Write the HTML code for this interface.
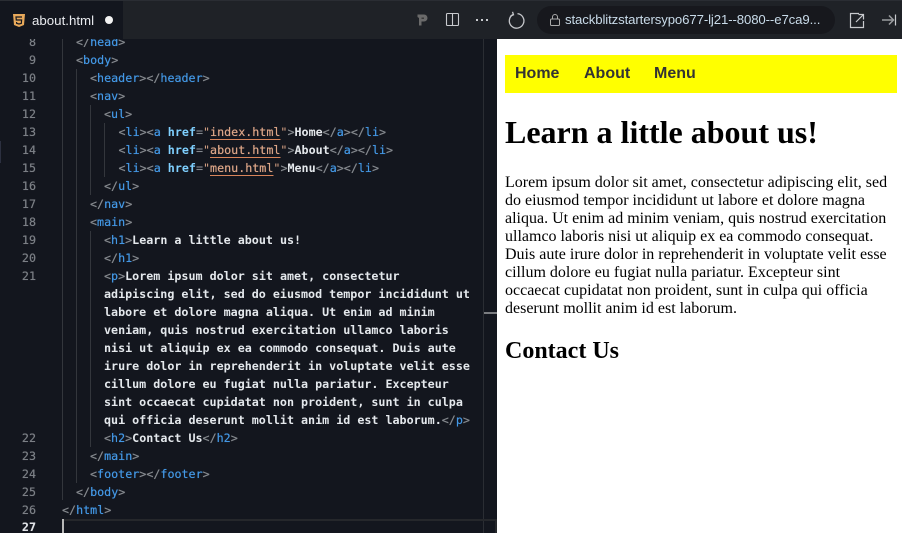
<!DOCTYPE html>
<html><head><meta charset="utf-8">
<style>
html,body{margin:0;padding:0;height:533px;overflow:hidden}
body{width:902px;height:533px;overflow:hidden;position:relative;background:#13161e;font-family:"Liberation Sans",sans-serif}
.abs{position:absolute}
#top{left:0;top:0;width:902px;height:39px;background:#1f2227;border-top:1px solid #2a2d33;box-sizing:border-box}
#tab{left:0;top:1px;width:123px;height:38px;background:#13161e}
#tabt{left:32px;top:13px;font-size:13.3px;color:#e8eaee;line-height:16px}
#url{left:537px;top:6px;width:298px;height:28px;border-radius:14px;background:#17181d}
#urlt{left:565px;top:12px;font-size:13.2px;line-height:16px;color:#c9dbe9;white-space:nowrap;letter-spacing:-.11px}
.l{position:absolute;font:11.7px/18px "DejaVu Sans Mono",monospace;white-space:pre;height:18px;color:#fff}
.n{position:absolute;left:0;width:36px;text-align:right;font:11.7px/18px "DejaVu Sans Mono",monospace;color:#7b7f85;text-shadow:0 0 .5px #7b7f85}
.g{color:#85898e;text-shadow:0 0 .5px #85898e}.t{color:#4397e4;text-shadow:0 0 .5px #4397e4}.a{color:#7fd0ff;font-weight:bold}.s{color:#dca587;text-shadow:0 0 .5px #dca587;text-decoration:underline;text-underline-offset:3px;text-decoration-color:#d8845a}.q{color:#dca587}.w{color:#e4e8ec;font-weight:bold}
.ig{position:absolute;width:1px;background:#33363c}
#pre{left:497px;top:39px;width:405px;height:494px;background:#fff}
#nav{left:505px;top:55px;width:392px;height:38px;background:#ff0}
.nv{position:absolute;top:65px;font:bold 16px/18px "Liberation Sans",sans-serif;color:#333}
#h1{left:505px;top:114px;font:bold 32px/37px "Liberation Serif",serif;color:#000;white-space:nowrap}
#p{left:505px;top:174px;width:392px;font:16px/18px "Liberation Serif",serif;color:#000}
#h2{left:505px;top:337px;font:bold 24px/28px "Liberation Serif",serif;color:#000;white-space:nowrap}
</style></head><body>

<div class="abs" style="left:0;top:39px;width:497px;height:494px;background:#13161e"></div>

<!-- indent guides -->
<div class="ig" style="left:62px;top:39px;height:461px"></div>
<div class="ig" style="left:76px;top:69px;height:414px"></div>
<div class="ig" style="left:90px;top:105px;height:90px"></div>
<div class="ig" style="left:90px;top:231px;height:216px"></div>
<div class="ig" style="left:104px;top:123px;height:54px"></div>
<div class="ig" style="left:483px;top:39px;height:494px;background:#2a2d33"></div>
<div class="abs" style="left:0;top:141px;width:1px;height:22px;background:#2c3040"></div>

<div class="n" style="top:33px">8</div><div class="l" style="left:76px;top:33px"><span class="g">&lt;/</span><span class="t">head</span><span class="g">&gt;</span></div>
<div class="n" style="top:51px">9</div><div class="l" style="left:76px;top:51px"><span class="g">&lt;</span><span class="t">body</span><span class="g">&gt;</span></div>
<div class="n" style="top:69px">10</div><div class="l" style="left:90px;top:69px"><span class="g">&lt;</span><span class="t">header</span><span class="g">&gt;&lt;/</span><span class="t">header</span><span class="g">&gt;</span></div>
<div class="n" style="top:87px">11</div><div class="l" style="left:90px;top:87px"><span class="g">&lt;</span><span class="t">nav</span><span class="g">&gt;</span></div>
<div class="n" style="top:105px">12</div><div class="l" style="left:104px;top:105px"><span class="g">&lt;</span><span class="t">ul</span><span class="g">&gt;</span></div>
<div class="n" style="top:123px">13</div><div class="l" style="left:118.5px;top:123px"><span class="g">&lt;</span><span class="t">li</span><span class="g">&gt;&lt;</span><span class="t">a</span> <span class="a">href</span><span class="g">=</span><span class="q">"</span><span class="s">index.html</span><span class="q">"</span><span class="g">&gt;</span><span class="w">Home</span><span class="g">&lt;/</span><span class="t">a</span><span class="g">&gt;&lt;/</span><span class="t">li</span><span class="g">&gt;</span></div>
<div class="n" style="top:141px">14</div><div class="l" style="left:118.5px;top:141px"><span class="g">&lt;</span><span class="t">li</span><span class="g">&gt;&lt;</span><span class="t">a</span> <span class="a">href</span><span class="g">=</span><span class="q">"</span><span class="s">about.html</span><span class="q">"</span><span class="g">&gt;</span><span class="w">About</span><span class="g">&lt;/</span><span class="t">a</span><span class="g">&gt;&lt;/</span><span class="t">li</span><span class="g">&gt;</span></div>
<div class="n" style="top:159px">15</div><div class="l" style="left:118.5px;top:159px"><span class="g">&lt;</span><span class="t">li</span><span class="g">&gt;&lt;</span><span class="t">a</span> <span class="a">href</span><span class="g">=</span><span class="q">"</span><span class="s">menu.html</span><span class="q">"</span><span class="g">&gt;</span><span class="w">Menu</span><span class="g">&lt;/</span><span class="t">a</span><span class="g">&gt;&lt;/</span><span class="t">li</span><span class="g">&gt;</span></div>
<div class="n" style="top:177px">16</div><div class="l" style="left:104px;top:177px"><span class="g">&lt;/</span><span class="t">ul</span><span class="g">&gt;</span></div>
<div class="n" style="top:195px">17</div><div class="l" style="left:90px;top:195px"><span class="g">&lt;/</span><span class="t">nav</span><span class="g">&gt;</span></div>
<div class="n" style="top:213px">18</div><div class="l" style="left:90px;top:213px"><span class="g">&lt;</span><span class="t">main</span><span class="g">&gt;</span></div>
<div class="n" style="top:231px">19</div><div class="l" style="left:104px;top:231px"><span class="g">&lt;</span><span class="t">h1</span><span class="g">&gt;</span><span class="w">Learn a little about us!</span></div>
<div class="n" style="top:249px">20</div><div class="l" style="left:104px;top:249px"><span class="g">&lt;/</span><span class="t">h1</span><span class="g">&gt;</span></div>
<div class="n" style="top:267px">21</div><div class="l" style="left:104px;top:267px"><span class="g">&lt;</span><span class="t">p</span><span class="g">&gt;</span><span class="w">Lorem ipsum dolor sit amet, consectetur</span></div>
<div class="l w" style="left:104px;top:285px">adipiscing elit, sed do eiusmod tempor incididunt ut</div>
<div class="l w" style="left:104px;top:303px">labore et dolore magna aliqua. Ut enim ad minim</div>
<div class="l w" style="left:104px;top:321px">veniam, quis nostrud exercitation ullamco laboris</div>
<div class="l w" style="left:104px;top:339px">nisi ut aliquip ex ea commodo consequat. Duis aute</div>
<div class="l w" style="left:104px;top:357px">irure dolor in reprehenderit in voluptate velit esse</div>
<div class="l w" style="left:104px;top:375px">cillum dolore eu fugiat nulla pariatur. Excepteur</div>
<div class="l w" style="left:104px;top:393px">sint occaecat cupidatat non proident, sunt in culpa</div>
<div class="l" style="left:104px;top:411px"><span class="w">qui officia deserunt mollit anim id est laborum.</span><span class="g">&lt;/</span><span class="t">p</span><span class="g">&gt;</span></div>
<div class="n" style="top:429px">22</div><div class="l" style="left:104px;top:429px"><span class="g">&lt;</span><span class="t">h2</span><span class="g">&gt;</span><span class="w">Contact Us</span><span class="g">&lt;/</span><span class="t">h2</span><span class="g">&gt;</span></div>
<div class="n" style="top:447px">23</div><div class="l" style="left:90px;top:447px"><span class="g">&lt;/</span><span class="t">main</span><span class="g">&gt;</span></div>
<div class="n" style="top:465px">24</div><div class="l" style="left:90px;top:465px"><span class="g">&lt;</span><span class="t">footer</span><span class="g">&gt;&lt;/</span><span class="t">footer</span><span class="g">&gt;</span></div>
<div class="n" style="top:483px">25</div><div class="l" style="left:76px;top:483px"><span class="g">&lt;/</span><span class="t">body</span><span class="g">&gt;</span></div>
<div class="n" style="top:501px">26</div><div class="l" style="left:62px;top:501px"><span class="g">&lt;/</span><span class="t">html</span><span class="g">&gt;</span></div>
<div class="n" style="top:518px;color:#e0e2e6;font-weight:bold">27</div>

<!-- current line -->
<div class="abs" style="left:62px;top:519px;width:435px;height:2px;background:#25272b"></div>
<div class="abs" style="left:62px;top:519px;width:2px;height:14px;background:#b8b8b8"></div>
<div class="abs" style="left:495px;top:519px;width:2px;height:14px;background:#25272b"></div>
<!-- sash -->
<div class="abs" style="left:484px;top:312px;width:13px;height:2px;background:#7a7c80"></div>

<!-- top bar -->
<div class="abs" id="top"></div>
<div class="abs" id="tab"></div>
<svg class="abs" style="left:12px;top:13px" width="14" height="15" viewBox="0 0 14 15"><path d="M1 1h12l-1 11-5 2-5-2z" fill="#e8a95b"/><path d="M10 4H4l.3 3h5.300l-.3 3.400L7 11l-2.300-.6-.1-1.400" fill="none" stroke="#13161e" stroke-width="1.200"/></svg>
<div class="abs" id="tabt">about.html</div>
<div class="abs" style="left:105px;top:16px;width:8px;height:8px;border-radius:50%;background:#f2f2f2"></div>

<svg class="abs" style="left:416px;top:13px" width="13" height="14" viewBox="0 0 13 14"><path d="M1.500 1.500h6.500a3.500 3.500 0 0 1 3.500 3.500 3.500 3.500 0 0 1-3.500 3.500H5.500v4h-2.500V5l-1.500-1z" fill="#6a6a6a"/><path d="M5.500 4.500h2.500v1.500H5.500z" fill="#3a3a3a"/></svg>
<svg class="abs" style="left:445px;top:12px" width="15" height="15" viewBox="0 0 15 15"><rect x="1.500" y="1.500" width="12" height="12" rx="1" fill="none" stroke="#c8cace" stroke-width="1.100"/><path d="M7.500 1.500v12" stroke="#c8cace" stroke-width="1.100"/></svg>
<div class="abs" style="left:476px;top:19px;width:2px;height:2px;background:#c8cace;box-shadow:5px 0 #c8cace,10px 0 #c8cace"></div>
<svg class="abs" style="left:507px;top:11px" width="20" height="20" viewBox="0 0 20 20"><path d="M6 3.500A7.300 7.300 0 1 0 10.500 2.600" fill="none" stroke="#c4c6ca" stroke-width="1.300"/><path d="M5.500 .8 6.500 3.800 3.500 5" fill="none" stroke="#c4c6ca" stroke-width="1.300"/></svg>
<div class="abs" id="url"></div>
<svg class="abs" style="left:549px;top:13px" width="12" height="14" viewBox="0 0 12 14"><rect x="1.500" y="6" width="9" height="6.500" rx="1" fill="none" stroke="#aaa" stroke-width="1"/><path d="M3.500 6V4a2.500 2.500 0 0 1 5 0v2" fill="none" stroke="#aaa" stroke-width="1"/></svg>
<div class="abs" id="urlt">stackblitzstartersypo677-lj21--8080--e7ca9...</div>
<svg class="abs" style="left:849px;top:12px" width="16" height="17" viewBox="0 0 16 17"><path d="M10 1.500H1.500v14h13V9" fill="none" stroke="#c8cace" stroke-width="1.200"/><path d="M14 3 7 10M9.500 2.500h5v5" fill="none" stroke="#c8cace" stroke-width="1.200"/></svg>
<svg class="abs" style="left:881px;top:12px" width="16" height="16" viewBox="0 0 16 16"><path d="M1 8h11M8 3.500 12.500 8 8 12.500" fill="none" stroke="#9a9c9f" stroke-width="1.500"/><path d="M14.500 2.500v11" stroke="#c8cace" stroke-width="1.200"/></svg>

<!-- preview -->
<div class="abs" id="pre"></div>
<div class="abs" id="nav"></div>
<div class="nv" style="left:515px">Home</div>
<div class="nv" style="left:584px">About</div>
<div class="nv" style="left:654px">Menu</div>
<div class="abs" id="h1">Learn a little about us!</div>
<div class="abs" id="p">Lorem ipsum dolor sit amet, consectetur adipiscing elit, sed do eiusmod tempor incididunt ut labore et dolore magna aliqua. Ut enim ad minim veniam, quis nostrud exercitation ullamco laboris nisi ut aliquip ex ea commodo consequat. Duis aute irure dolor in reprehenderit in voluptate velit esse cillum dolore eu fugiat nulla pariatur. Excepteur sint occaecat cupidatat non proident, sunt in culpa qui officia deserunt mollit anim id est laborum.</div>
<div class="abs" id="h2">Contact Us</div>
</body></html>
